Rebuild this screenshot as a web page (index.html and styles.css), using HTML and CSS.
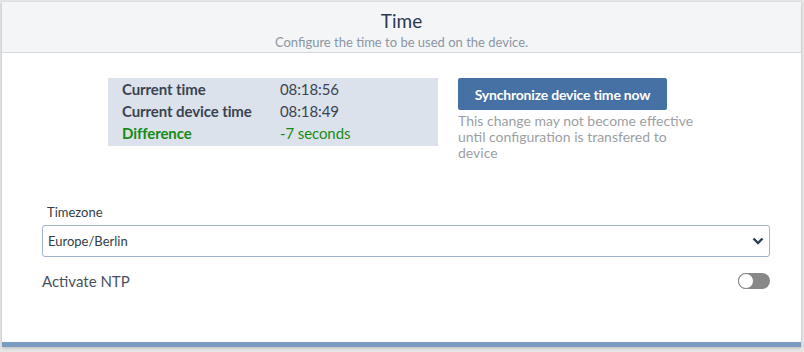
FILE: index.html
```html
<!DOCTYPE html>
<html lang="en">
<head>
    <meta charset="UTF-8"/>
    <title>Time</title>
    <link rel="stylesheet" href="styles.css">
</head>
<body>
    <main class="card">
        <header class="card-header">
            <h1>Time</h1>
            <p>Configure the time to be used on the device.</p>
        </header>

        <section class="card-body">
            <div class="sync-row">
                <div class="time-info">
                    <span class="key">Current time</span>
                    <span>08:18:56</span>
                    <span class="key">Current device time</span>
                    <span>08:18:49</span>
                    <span class="key diff">Difference</span>
                    <span class="diff">-7 seconds</span>
                </div>

                <div class="sync-action">
                    <button class="btn-sync">Synchronize device time now</button>
                    <p class="hint">This change may not become effective until configuration is transfered to device</p>
                </div>
            </div>

            <div class="field">
                <label for="timezone">Timezone</label>
                <div class="select-wrap">
                    <select id="timezone">
                        <option>Europe/Berlin</option>
                    </select>
                    <svg class="chevron" width="12" height="8" viewBox="0 0 12 8">
                        <path d="M1.5 1.5 L6 6 L10.5 1.5" fill="none" stroke="#2c3e55" stroke-width="2.4"/>
                    </svg>
                </div>
            </div>

            <div class="ntp-row">
                <span>Activate NTP</span>
                <span class="toggle"><span class="knob"></span></span>
            </div>
        </section>
    </main>
</body>
</html>
```

FILE: styles.css
```css
* {
    margin: 0;
    padding: 0;
    box-sizing: border-box;
}

body {
    font-family: Lato, 'Noto Sans', sans-serif;
    background-color: #e6e6e6;
    color: #333d47;
    padding: 2px 3px 5px 2px;
    height: 352px;
    overflow: hidden;
}

.card {
    background-color: #fff;
    height: 345px;
    border-bottom: 5px solid #7b9bc2;
    box-shadow: 0 1px 3px rgba(0, 0, 0, 0.2);
}

.card-header {
    background-color: #f4f5f7;
    border-bottom: 1px solid #d5d8dc;
    height: 51px;
    text-align: center;
    padding-top: 7px;
}

.card-header h1 {
    font-size: 19px;
    font-weight: normal;
    color: #2b3a4d;
    line-height: 24px;
}

.card-header p {
    font-size: 13px;
    color: #8a96a3;
    line-height: 18px;
}

.card-body {
    padding: 25px 31px 0 40px;
}

.sync-row {
    display: flex;
    gap: 20px;
    padding-left: 66px;
}

.time-info {
    background-color: #dbe2ec;
    width: 330px;
    height: 68px;
    display: grid;
    grid-template-columns: 158px 1fr;
    grid-auto-rows: 22px;
    align-content: start;
    padding-left: 14px;
    font-size: 15px;
    line-height: 22px;
    color: #3a4450;
    letter-spacing: -0.1px;
}

.time-info .key {
    font-weight: bold;
}

.time-info .diff {
    color: #178a17;
}

.sync-action {
    width: 240px;
}

.btn-sync {
    background-color: #4671a4;
    color: #fff;
    border: none;
    border-radius: 2px;
    font-family: inherit;
    font-weight: bold;
    font-size: 14px;
    letter-spacing: -0.2px;
    width: 209px;
    height: 32px;
}

.hint {
    font-size: 14px;
    line-height: 16px;
    color: #9c9fa3;
    margin-top: 3px;
}

.field {
    margin-top: 43px;
}

.field label {
    display: block;
    font-size: 13px;
    color: #333d47;
    padding-left: 5px;
    margin-bottom: 5px;
}

.select-wrap {
    position: relative;
}

.select-wrap select {
    appearance: none;
    width: 100%;
    height: 32px;
    border: 1px solid #9fb5cc;
    border-radius: 3px;
    background-color: #fff;
    font-family: inherit;
    font-size: 13px;
    color: #333d47;
    padding-left: 5px;
}

.chevron {
    position: absolute;
    right: 6px;
    top: 12px;
}

.ntp-row {
    display: flex;
    justify-content: space-between;
    align-items: center;
    margin-top: 15px;
    font-size: 15px;
    color: #47525e;
}

.toggle {
    width: 32px;
    height: 16px;
    background-color: #888;
    border-radius: 8px;
    position: relative;
}

.knob {
    position: absolute;
    left: 0;
    top: 0;
    width: 16px;
    height: 16px;
    border-radius: 50%;
    background-color: #fff;
    border: 1px solid #888;
}
```
